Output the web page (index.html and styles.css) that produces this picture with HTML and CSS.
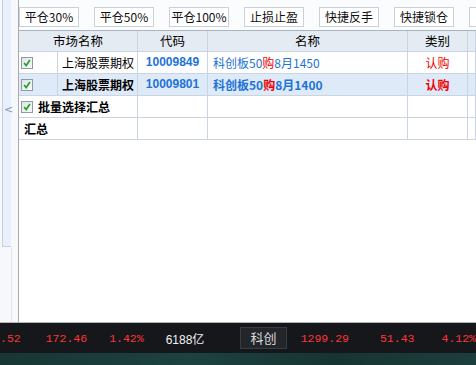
FILE: index.html
```html
<!DOCTYPE html>
<html lang="zh-CN">
<head>
  <meta charset="UTF-8">
  <title>期权快捷交易</title>
  <link rel="stylesheet" href="styles.css">
</head>
<body>

<div class="workspace">
  <div class="side">
    <div class="side-rail">
      <span class="side-arrow">&lt;</span>
    </div>
    <div class="side-tail"></div>
  </div>

  <div class="main">
    <div class="toolbar">
      <button class="btn">平仓30%</button>
      <button class="btn">平仓50%</button>
      <button class="btn">平仓100%</button>
      <button class="btn">止损止盈</button>
      <button class="btn">快捷反手</button>
      <button class="btn">快捷锁仓</button>
      <button class="btn">快捷</button>
    </div>

    <div class="grid">
      <div class="row head">
        <div class="cell span2">市场名称</div>
        <div class="cell">代码</div>
        <div class="cell">名称</div>
        <div class="cell">类别</div>
        <div class="cell"></div>
      </div>

      <div class="row">
        <div class="cell check-cell"><span class="check"><svg viewBox="0 0 12 12"><path d="M2.5 6 L5 9 L9.5 2.5"/></svg></span></div>
        <div class="cell market">上海股票期权</div>
        <div class="cell code">10009849</div>
        <div class="cell name">科创板50<span class="buy">购</span>8月1450</div>
        <div class="cell kind">认购</div>
        <div class="cell"></div>
      </div>

      <div class="row selected">
        <div class="cell check-cell"><span class="check"><svg viewBox="0 0 12 12"><path d="M2.5 6 L5 9 L9.5 2.5"/></svg></span></div>
        <div class="cell market">上海股票期权</div>
        <div class="cell code">10009801</div>
        <div class="cell name">科创板50<span class="buy">购</span>8月1400</div>
        <div class="cell kind">认购</div>
        <div class="cell"></div>
      </div>

      <div class="row summary">
        <div class="cell span2 batch"><span class="check"><svg viewBox="0 0 12 12"><path d="M2.5 6 L5 9 L9.5 2.5"/></svg></span>批量选择汇总</div>
        <div class="cell"></div>
        <div class="cell"></div>
        <div class="cell"></div>
        <div class="cell"></div>
      </div>

      <div class="row summary">
        <div class="cell span2 total">汇总</div>
        <div class="cell"></div>
        <div class="cell"></div>
        <div class="cell"></div>
        <div class="cell"></div>
      </div>
    </div>
  </div>
</div>

<div class="ticker">
  <span class="num first">.52</span>
  <span class="num t1">172.46</span>
  <span class="num t2">1.42%</span>
  <span class="vol">6188亿</span>
  <span class="board">科创</span>
  <span class="num t3">1299.29</span>
  <span class="num t4">51.43</span>
  <span class="num t5">4.12%</span>
</div>
<div class="sea"></div>

</body>
</html>
```

FILE: styles.css
```css
html, body {
  margin: 0;
  padding: 0;
}

body {
  width: 476px;
  height: 365px;
  overflow: hidden;
  background: #ffffff;
  font-family: "Noto Sans CJK SC", "Liberation Sans", sans-serif;
  font-size: 12px;
  color: #000;
}

/* top area: side rail + main panel */
.workspace {
  display: flex;
  height: 322px;
  border-bottom: 1px solid #b4b4b4;
}

.side {
  width: 18px;
  flex-shrink: 0;
  background: #f6f8fb;
}

.side-rail {
  margin-left: 2px;
  width: 8px;
  height: 246px;
  border-left: 1px solid #c6cfdb;
  border-bottom: 1px solid #c6cfdb;
  background: #e8f0fc;
  display: flex;
  align-items: center;
  padding-top: 0;
}

.side-arrow {
  margin-top: -28px;
  margin-left: 1px;
  color: #8494b4;
  font-family: "DejaVu Sans", sans-serif;
  font-size: 11px;
  line-height: 1;
}

.side-tail {
  margin-left: 11px;
  width: 1px;
  height: 75px;
  background: #e6e6e6;
}

.main {
  flex: 1;
  border-left: 1px solid #a9a9a9;
  background: #fff;
  overflow: hidden;
}

.toolbar {
  display: flex;
  gap: 15px;
  height: 30px;
  padding-top: 7px;
  box-sizing: border-box;
  background: #fbfcfe;
  white-space: nowrap;
}

.btn {
  flex-shrink: 0;
  width: 60px;
  height: 20px;
  padding: 0;
  border: 1px solid #c9d1dd;
  background: #ffffff;
  font-family: "Noto Sans CJK SC", sans-serif;
  font-size: 12px;
  line-height: 18px;
  color: #111;
}

/* table */
.grid {
  border-top: 1px solid #aab3c0;
}

.row {
  display: grid;
  grid-template-columns: 39px 80px 70px 200px 60px 1fr;
  height: 22px;
  box-sizing: border-box;
  border-bottom: 1px solid #c9d5e2;
}

.row.head {
  height: 21px;
  background: #e5ebf3;
}

.cell {
  box-sizing: border-box;
  border-right: 1px solid #c9d5e2;
  line-height: 21px;
  text-align: center;
  white-space: nowrap;
  overflow: hidden;
}

.head .cell {
  line-height: 20px;
  font-size: 12.5px;
}

.span2 {
  grid-column: span 2;
}

.selected {
  background: #dfeaf9;
  font-weight: bold;
}

.check-cell {
  border-right: 1px solid #c9d5e2;
  text-align: left;
  padding-left: 2px;
}

.check {
  display: inline-block;
  width: 12px;
  height: 12px;
  box-sizing: border-box;
  border: 1px solid #8e9aa6;
  background: linear-gradient(135deg, #dfe5ec, #f8fafc);
  vertical-align: middle;
  margin-top: -3px;
}

.check svg {
  display: block;
  width: 10px;
  height: 10px;
}

.check path {
  fill: none;
  stroke: #22a21e;
  stroke-width: 2;
}

.market {
  text-align: left;
  padding-left: 4px;
}

.code {
  font-family: "Liberation Sans", sans-serif;
  font-weight: bold;
  color: #1d73d6;
}

.name {
  text-align: left;
  padding-left: 5px;
  color: #1d73d6;
}

.buy, .kind {
  color: #f00000;
}

.summary .cell {
  font-weight: bold;
}

.batch {
  text-align: left;
  padding-left: 2px;
}

.batch .check {
  margin-right: 5px;
}

.total {
  text-align: left;
  padding-left: 5px;
}

/* bottom quote bar */
.ticker {
  display: flex;
  align-items: center;
  height: 30px;
  background: #16171b;
  white-space: nowrap;
  overflow: hidden;
}

.num {
  font-family: "Liberation Mono", monospace;
  font-size: 11.5px;
  color: #ff3535;
}

.first { margin-left: 0; }
.t1 { margin-left: 25px; }
.t2 { margin-left: 22px; }
.t3 { margin-left: 14px; }
.t4 { margin-left: 31px; }
.t5 { margin-left: 27px; }

.vol {
  margin-left: 22px;
  font-family: "Liberation Sans", "Noto Sans CJK SC", sans-serif;
  font-size: 12px;
  color: #f2f2f2;
}

.board {
  margin-left: 36px;
  width: 47px;
  height: 22px;
  box-sizing: border-box;
  border: 1px solid #383b41;
  background: #22252a;
  color: #dcdcdc;
  font-size: 13px;
  line-height: 20px;
  text-align: center;
}

.sea {
  height: 12px;
  background: linear-gradient(90deg, #173634, #1d4240 40%, #163432 70%, #1c3e3d);
}
```
